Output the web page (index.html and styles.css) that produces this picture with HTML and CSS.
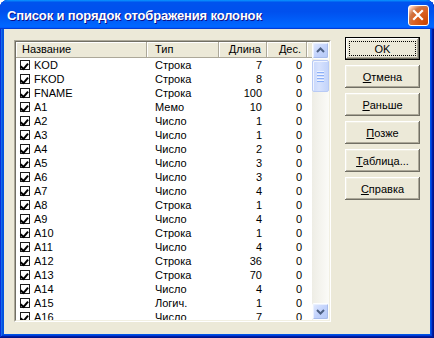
FILE: index.html
```html
<!DOCTYPE html>
<html>
<head>
<meta charset="utf-8">
<link rel="stylesheet" href="styles.css">
</head>
<body>
<div class="window">
  <div class="titlebar">
    <span class="title">Список и порядок отображения колонок</span>
    <div class="close"><svg width="21" height="21" viewBox="0 0 21 21"><path d="M6 6 L14 14 M14 6 L6 14" stroke="#fff" stroke-width="2.2" stroke-linecap="square"/></svg></div>
  </div>
  <div class="client">
    <div class="list">
      <div class="list-inner">
        <div class="grid">
          <div class="header">
            <div class="hcell c-name">Название</div>
            <div class="hcell c-type">Тип</div>
            <div class="hcell c-len">Длина</div>
            <div class="hcell c-dec">Дес.</div>
            <div class="hcell c-fill"></div>
          </div>
          <div class="rows">
            <div class="row"><span class="c-name"><i class="chk"></i>KOD</span><span class="c-type">Строка</span><span class="c-len">7</span><span class="c-dec">0</span></div>
            <div class="row"><span class="c-name"><i class="chk"></i>FKOD</span><span class="c-type">Строка</span><span class="c-len">8</span><span class="c-dec">0</span></div>
            <div class="row"><span class="c-name"><i class="chk"></i>FNAME</span><span class="c-type">Строка</span><span class="c-len">100</span><span class="c-dec">0</span></div>
            <div class="row"><span class="c-name"><i class="chk"></i>A1</span><span class="c-type">Мемо</span><span class="c-len">10</span><span class="c-dec">0</span></div>
            <div class="row"><span class="c-name"><i class="chk"></i>A2</span><span class="c-type">Число</span><span class="c-len">1</span><span class="c-dec">0</span></div>
            <div class="row"><span class="c-name"><i class="chk"></i>A3</span><span class="c-type">Число</span><span class="c-len">1</span><span class="c-dec">0</span></div>
            <div class="row"><span class="c-name"><i class="chk"></i>A4</span><span class="c-type">Число</span><span class="c-len">2</span><span class="c-dec">0</span></div>
            <div class="row"><span class="c-name"><i class="chk"></i>A5</span><span class="c-type">Число</span><span class="c-len">3</span><span class="c-dec">0</span></div>
            <div class="row"><span class="c-name"><i class="chk"></i>A6</span><span class="c-type">Число</span><span class="c-len">3</span><span class="c-dec">0</span></div>
            <div class="row"><span class="c-name"><i class="chk"></i>A7</span><span class="c-type">Число</span><span class="c-len">4</span><span class="c-dec">0</span></div>
            <div class="row"><span class="c-name"><i class="chk"></i>A8</span><span class="c-type">Строка</span><span class="c-len">1</span><span class="c-dec">0</span></div>
            <div class="row"><span class="c-name"><i class="chk"></i>A9</span><span class="c-type">Число</span><span class="c-len">4</span><span class="c-dec">0</span></div>
            <div class="row"><span class="c-name"><i class="chk"></i>A10</span><span class="c-type">Строка</span><span class="c-len">1</span><span class="c-dec">0</span></div>
            <div class="row"><span class="c-name"><i class="chk"></i>A11</span><span class="c-type">Число</span><span class="c-len">4</span><span class="c-dec">0</span></div>
            <div class="row"><span class="c-name"><i class="chk"></i>A12</span><span class="c-type">Строка</span><span class="c-len">36</span><span class="c-dec">0</span></div>
            <div class="row"><span class="c-name"><i class="chk"></i>A13</span><span class="c-type">Строка</span><span class="c-len">70</span><span class="c-dec">0</span></div>
            <div class="row"><span class="c-name"><i class="chk"></i>A14</span><span class="c-type">Число</span><span class="c-len">4</span><span class="c-dec">0</span></div>
            <div class="row"><span class="c-name"><i class="chk"></i>A15</span><span class="c-type">Логич.</span><span class="c-len">1</span><span class="c-dec">0</span></div>
            <div class="row"><span class="c-name"><i class="chk"></i>A16</span><span class="c-type">Число</span><span class="c-len">7</span><span class="c-dec">0</span></div>
          </div>
        </div>
        <div class="scrollbar">
          <div class="sb-btn"><svg width="15" height="15" viewBox="0 0 15 15"><path d="M4 9 L7.5 5.5 L11 9" fill="none" stroke="#4D6185" stroke-width="2"/></svg></div>
          <div class="sb-thumb"><span class="grip"></span><span class="grip"></span><span class="grip"></span><span class="grip"></span></div>
          <div class="sb-track"></div>
          <div class="sb-btn"><svg width="15" height="15" viewBox="0 0 15 15"><path d="M4 6 L7.5 9.5 L11 6" fill="none" stroke="#4D6185" stroke-width="2"/></svg></div>
        </div>
      </div>
    </div>
    <div class="buttons">
      <div class="btn btn-default">OK</div>
      <div class="btn"><u>О</u>тмена</div>
      <div class="btn"><u>Р</u>аньше</div>
      <div class="btn"><u>П</u>озже</div>
      <div class="btn"><u>Т</u>аблица...</div>
      <div class="btn"><u>С</u>правка</div>
    </div>
  </div>
</div>
</body>
</html>
```
FILE: styles.css
```css
* { box-sizing: border-box; }
html, body { margin: 0; padding: 0; background: #fff; }
body { width: 434px; height: 338px; overflow: hidden; font-family: "Liberation Sans", Arial, sans-serif; font-size: 11px; color: #000; }

.window {
  width: 434px; height: 338px;
  display: flex; flex-direction: column;
  background: #0054E3;
  border-radius: 8px 8px 0 0;
  padding: 0 4px 4px 4px;
  box-shadow: inset -1px -1px #00138C, inset 1px 1px #0831D9, inset -2px -2px #001EA0, inset 2px 2px #166AEE, inset -3px -3px #003BDA, inset 3px 3px #0855DD;
}

.titlebar {
  height: 29px; flex: none;
  margin: 0 -4px;
  padding: 0 5px 0 7px;
  display: flex; align-items: center; justify-content: space-between;
  border-radius: 8px 8px 0 0;
  background: linear-gradient(180deg, #0997FF, #0053EE 8%, #0050EE 40%, #0066FF 88%, #0066FF 93%, #005BFF 95%, #003DD7 96%, #003DD7);
}
.title {
  color: #fff; font-weight: bold; font-size: 13px;
  font-family: "Liberation Sans", Arial, sans-serif;
  letter-spacing: -0.15px;
  text-shadow: 1px 1px #0F1089;
  padding-top: 1px;
}
.close {
  width: 21px; height: 21px;
  border: 1px solid #fff; border-radius: 3px;
  background: radial-gradient(circle at 90% 90%, #CC4600 0%, #DC6527 55%, #CD7546 70%, #FFCCB2 90%, #fff 100%);
  display: flex; align-items: center; justify-content: center;
  margin-top: 1px;
}
.close svg { display: block; margin: -1px; }

.client {
  flex: 1;
  background: #ECE9D8;
  display: flex; align-items: flex-start;
  padding: 8px 0 0 10px;
}

.list {
  margin-top: 3px;
  width: 317px; height: 282px;
  border: 1px solid; border-color: #ACA899 #fff #fff #ACA899;
}
.list-inner {
  height: 100%;
  border: 1px solid; border-color: #716F64 #F1EFE2 #F1EFE2 #716F64;
  background: #fff;
  display: flex;
  overflow: hidden;
}
.grid { flex: 1; overflow: hidden; }

.header { display: flex; height: 16px; }
.hcell {
  height: 16px; line-height: 15px;
  background: #ECE9D8;
  border-right: 1px solid #ACA899;
  border-bottom: 1px solid #ACA899;
  box-shadow: inset 1px 1px #fff;
  white-space: nowrap;
}
.hcell.c-fill { flex: 1; border-right: none; }

.c-name { width: 131px; padding-left: 6px; }
.c-type { width: 72px; padding-left: 8px; }
.c-len { width: 48px; text-align: right; padding-right: 5px; }
.c-dec { width: 40px; text-align: right; padding-right: 5px; }

.row { display: flex; height: 14px; line-height: 14px; white-space: nowrap; }
.row .c-name { padding-left: 4px; display: flex; align-items: center; }
.chk {
  width: 10px; height: 10px; margin-right: 4px; flex: none;
  border: 1px solid #1C1C1C;
  background: #fff;
  position: relative;
}
.chk::after {
  content: ""; position: absolute;
  width: 3px; height: 6px;
  border: solid #000; border-width: 0 2px 2px 0;
  transform: rotate(40deg);
  transform-origin: 0 0;
  left: 4px; top: 0px;
}

.scrollbar {
  width: 17px; flex: none;
  display: flex; flex-direction: column;
  background: linear-gradient(90deg, #EEEDE5, #FBFBF8);
}
.sb-btn {
  width: 17px; height: 17px; flex: none;
  border: 1px solid #FDFEFE; border-radius: 2px;
  background: linear-gradient(135deg, #E2EAFE, #C3D3FC 50%, #B4C8F6);
  box-shadow: inset -1px -1px #A8BCEB, inset 1px 1px #EAF0FF;
  display: flex; align-items: center; justify-content: center;
}
.sb-btn svg { display: block; }
.sb-thumb {
  width: 17px; height: 32px; flex: none;
  margin-top: 1px;
  border: 1px solid #B8CAF5; border-radius: 2px;
  background: linear-gradient(90deg, #C9D8FC, #D7E2FD 40%, #C3D4FB);
  box-shadow: inset 1px 1px #F0F4FF;
  display: flex; flex-direction: column; align-items: center; justify-content: center; gap: 1px;
}
.grip { display: block; width: 7px; height: 1px; background: #EEF3FF; border-bottom: 1px solid #8CB0F8; box-sizing: content-box; }
.sb-track { flex: 1; }

.buttons {
  margin-left: 14px;
  display: flex; flex-direction: column; gap: 5px;
}
.btn {
  width: 75px; height: 23px;
  background: #ECE9D8;
  display: flex; align-items: center; justify-content: center;
  box-shadow: inset -1px -1px #716F64, inset 1px 1px #fff, inset -2px -2px #ACA899, inset 2px 2px #F1EFE2;
  position: relative;
}
.btn u { text-decoration: underline; text-underline-offset: 1px; }
.btn-default {
  box-shadow: inset 0 0 0 1px #000, inset -2px -2px #716F64, inset 2px 2px #fff, inset -3px -3px #ACA899, inset 3px 3px #F1EFE2;
}
.btn-default::after {
  content: ""; position: absolute;
  left: 4px; top: 4px; right: 4px; bottom: 4px;
  border: 1px dotted #000;
}
```
